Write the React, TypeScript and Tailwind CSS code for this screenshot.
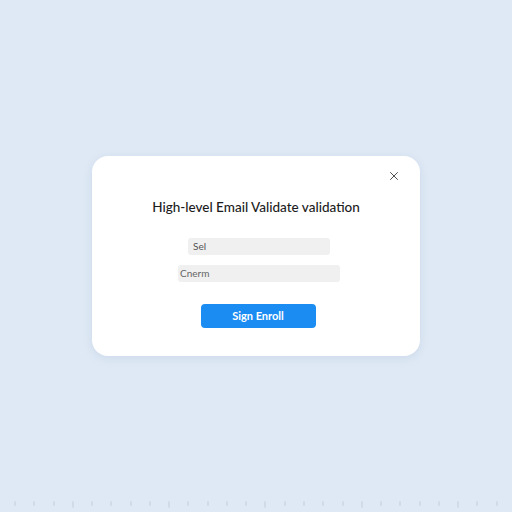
import React from 'react';
import { X } from 'lucide-react';

const ticks = Array.from({ length: 26 }, (_, i) => i);

const App = () => {
  return (
    <div className="h-screen w-full bg-[#dfe9f5] flex flex-col font-['Lato','Noto_Sans',sans-serif]">
      <div className="flex-1 flex items-center justify-center pt-[11px]">
        <div className="relative w-[328px] h-[200px] bg-white rounded-[16px] shadow-[0_2px_10px_rgba(120,150,190,0.18)] flex flex-col items-center">
          <button className="absolute right-[17px] top-[11px] text-[#444] p-0.5">
            <X size={14} strokeWidth={1.6} />
          </button>
          <h2 className="mt-[42px] text-[13.5px] leading-[18px] font-medium text-[#1c1c1c]">
            High-level Email Validate validation
          </h2>
          <div className="mt-[22px] ml-[6px] w-[142px] h-[17px] bg-[#f0f0f0] rounded-[3px] flex items-center px-[5px] text-[10px] text-[#555]">
            Sel
          </div>
          <div className="mt-[10px] ml-[6px] w-[162px] h-[17px] bg-[#f0f0f0] rounded-[3px] flex items-center px-[2px] text-[10px] text-[#666]">
            Cnerm
          </div>
          <button className="mt-[22px] ml-[4px] w-[115px] h-[24px] bg-[#1a8cf2] rounded-[4px] text-white text-[11px] font-bold">
            Sign Enroll
          </button>
        </div>
      </div>
      <div className="h-[11px] flex items-start justify-between px-[14px]">
        {ticks.map((i) => (
          <span key={i} className={`w-[2px] ${i % 5 === 3 ? 'h-[7px]' : 'h-[5px]'} bg-[#d0dbe8] rounded-full`} />
        ))}
      </div>
    </div>
  );
};

export default App;
